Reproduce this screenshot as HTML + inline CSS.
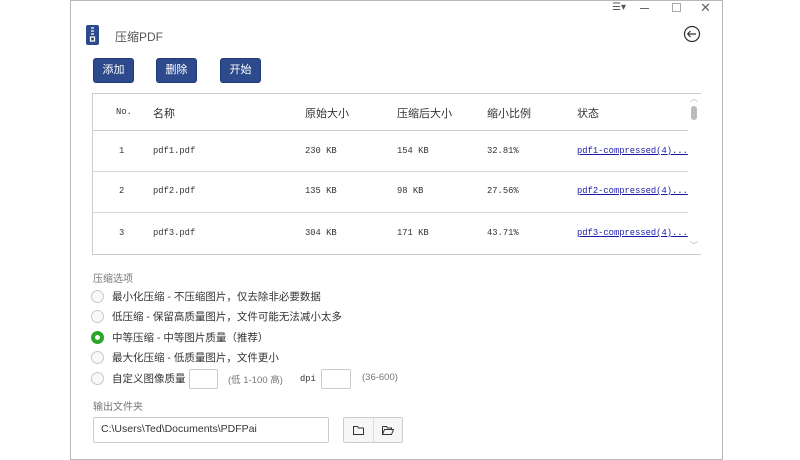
<!DOCTYPE html>
<html><head><meta charset="utf-8"><style>
*{margin:0;padding:0;box-sizing:border-box}
body{width:800px;height:456px;background:#fff;position:relative;overflow:hidden;font-family:"Liberation Sans","Noto Sans CJK SC",sans-serif;font-size:11px;color:#333}
.win{position:absolute;left:70px;top:0;width:653px;height:460px;border:1px solid #b8b8b8;background:#fff}
.a{position:absolute;white-space:nowrap}
.btn{position:absolute;top:58px;width:41px;height:25px;background:#2d4b8c;border:1px solid #1f3a73;border-radius:3px;color:#fff;font-size:11px;text-align:center;line-height:23px}
.mono{font-family:"Liberation Mono","Noto Sans CJK SC",monospace;font-size:8.8px}
.tbl{position:absolute;left:92px;top:93px;width:609px;height:162px;border:1px solid #ccc}
.hl{position:absolute;left:0;width:595px;height:1px;background:#d8d8d8}
.rad{position:absolute;left:91px;width:13px;height:13px;border:1px solid #c8c8c8;border-radius:50%;background:#f8f8f8}
.lbl{position:absolute;left:112px;font-size:10.5px;color:#333}
.inp{position:absolute;border:1px solid #ccc;border-radius:2px;background:#fff}
</style></head><body>
<div class="win"></div>
<div class="a" style="left:612px;top:2px;font-size:10px;color:#555">☰▾</div>
<div class="a" style="left:640px;top:8px;width:9px;height:1px;background:#666"></div>
<div class="a" style="left:672px;top:3px;width:9px;height:9px;border:1px solid #aaa"></div>
<div class="a" style="left:700px;top:0px;font-size:13px;color:#666">✕</div>
<svg class="a" style="left:683px;top:25px" width="18" height="18" viewBox="0 0 18 18"><circle cx="9" cy="9" r="7.5" fill="none" stroke="#333" stroke-width="1.2"/><path d="M4.5 9H13M4.5 9l3-3M4.5 9l3 3" fill="none" stroke="#333" stroke-width="1.2"/></svg>
<svg class="a" style="left:86px;top:25px" width="13" height="20" viewBox="0 0 13 20"><rect width="13" height="20" rx="2" fill="#2d4b8c"/><path d="M5 3h3M5 6h3M5 9h3M4.5 12h4v4h-4z" stroke="#fff" stroke-width="1.2" fill="none"/></svg>
<div class="a" style="left:115px;top:28px;font-size:12px;color:#555">压缩PDF</div>
<div class="btn" style="left:93px">添加</div>
<div class="btn" style="left:156px">删除</div>
<div class="btn" style="left:220px">开始</div>
<div class="tbl">
<div class="hl" style="top:36px;background:#ccc"></div>
<div class="hl" style="top:77px"></div>
<div class="hl" style="top:118px"></div>
<div class="a" style="left:596px;top:0;width:12px;height:160px;background:#fff"></div>
<div class="a" style="left:598px;top:12px;width:6px;height:14px;background:#bbb;border-radius:3px"></div>
<div class="a" style="left:597px;top:-1px;font-size:8px;color:#aaa">︿</div>
<div class="a" style="left:597px;top:146px;font-size:8px;color:#aaa">﹀</div>
</div>
<div class="a mono" style="left:116px;top:107px">No.</div>
<div class="a" style="left:153px;top:105px">名称</div>
<div class="a" style="left:305px;top:105px">原始大小</div>
<div class="a" style="left:397px;top:105px">压缩后大小</div>
<div class="a" style="left:487px;top:105px">缩小比例</div>
<div class="a" style="left:577px;top:105px">状态</div>

<div class="a mono" style="left:119px;top:146px">1</div><div class="a mono" style="left:153px;top:146px">pdf1.pdf</div><div class="a mono" style="left:305px;top:146px">230 KB</div><div class="a mono" style="left:397px;top:146px">154 KB</div><div class="a mono" style="left:487px;top:146px">32.81%</div><div class="a mono" style="left:577px;top:146px;color:#1a1aa8;text-decoration:underline">pdf1-compressed(4)...</div>
<div class="a mono" style="left:119px;top:186px">2</div><div class="a mono" style="left:153px;top:186px">pdf2.pdf</div><div class="a mono" style="left:305px;top:186px">135 KB</div><div class="a mono" style="left:397px;top:186px">98 KB</div><div class="a mono" style="left:487px;top:186px">27.56%</div><div class="a mono" style="left:577px;top:186px;color:#1a1aa8;text-decoration:underline">pdf2-compressed(4)...</div>
<div class="a mono" style="left:119px;top:228px">3</div><div class="a mono" style="left:153px;top:228px">pdf3.pdf</div><div class="a mono" style="left:305px;top:228px">304 KB</div><div class="a mono" style="left:397px;top:228px">171 KB</div><div class="a mono" style="left:487px;top:228px">43.71%</div><div class="a mono" style="left:577px;top:228px;color:#1a1aa8;text-decoration:underline">pdf3-compressed(4)...</div>

<div class="a" style="left:93px;top:270px;font-size:10px;color:#777">压缩选项</div>
<div class="rad" style="top:290px"></div><div class="lbl" style="top:289px">最小化压缩 - 不压缩图片，仅去除非必要数据</div>
<div class="rad" style="top:310px"></div><div class="lbl" style="top:309px">低压缩 - 保留高质量图片，文件可能无法减小太多</div>
<div class="rad" style="top:331px;border:4px solid #2aa52a;background:#fff"></div><div class="lbl" style="top:330px">中等压缩 - 中等图片质量（推荐）</div>
<div class="rad" style="top:351px"></div><div class="lbl" style="top:350px">最大化压缩 - 低质量图片，文件更小</div>
<div class="rad" style="top:372px"></div><div class="lbl" style="top:371px">自定义图像质量</div>
<div class="inp" style="left:189px;top:369px;width:29px;height:20px"></div>
<div class="a" style="left:228px;top:372px;font-size:9.5px;color:#777">(低 1-100 高)</div>
<div class="a mono" style="left:300px;top:374px">dpi</div>
<div class="inp" style="left:321px;top:369px;width:30px;height:20px"></div>
<div class="a" style="left:362px;top:372px;font-size:9.5px;color:#777">(36-600)</div>
<div class="a" style="left:93px;top:398px;font-size:10px;color:#777">输出文件夹</div>
<div class="inp" style="left:93px;top:417px;width:236px;height:26px"></div>
<div class="a" style="left:101px;top:423px;font-size:10.5px;color:#333">C:\Users\Ted\Documents\PDFPai</div>
<div class="inp" style="left:343px;top:417px;width:60px;height:26px;background:#f6f6f6"></div>
<div class="a" style="left:373px;top:418px;width:1px;height:24px;background:#ddd"></div>
<svg class="a" style="left:353px;top:425px" width="11" height="10"><path d="M.5 1.5h4l1 1.5h5v6.5H.5z" fill="none" stroke="#333"/></svg>
<svg class="a" style="left:382px;top:425px" width="12" height="10"><path d="M.5 1.5h4l1 1.5h4v2M.5 1.5v8h9l2-5h-9l-2 5" fill="none" stroke="#333"/></svg>
</body></html>
